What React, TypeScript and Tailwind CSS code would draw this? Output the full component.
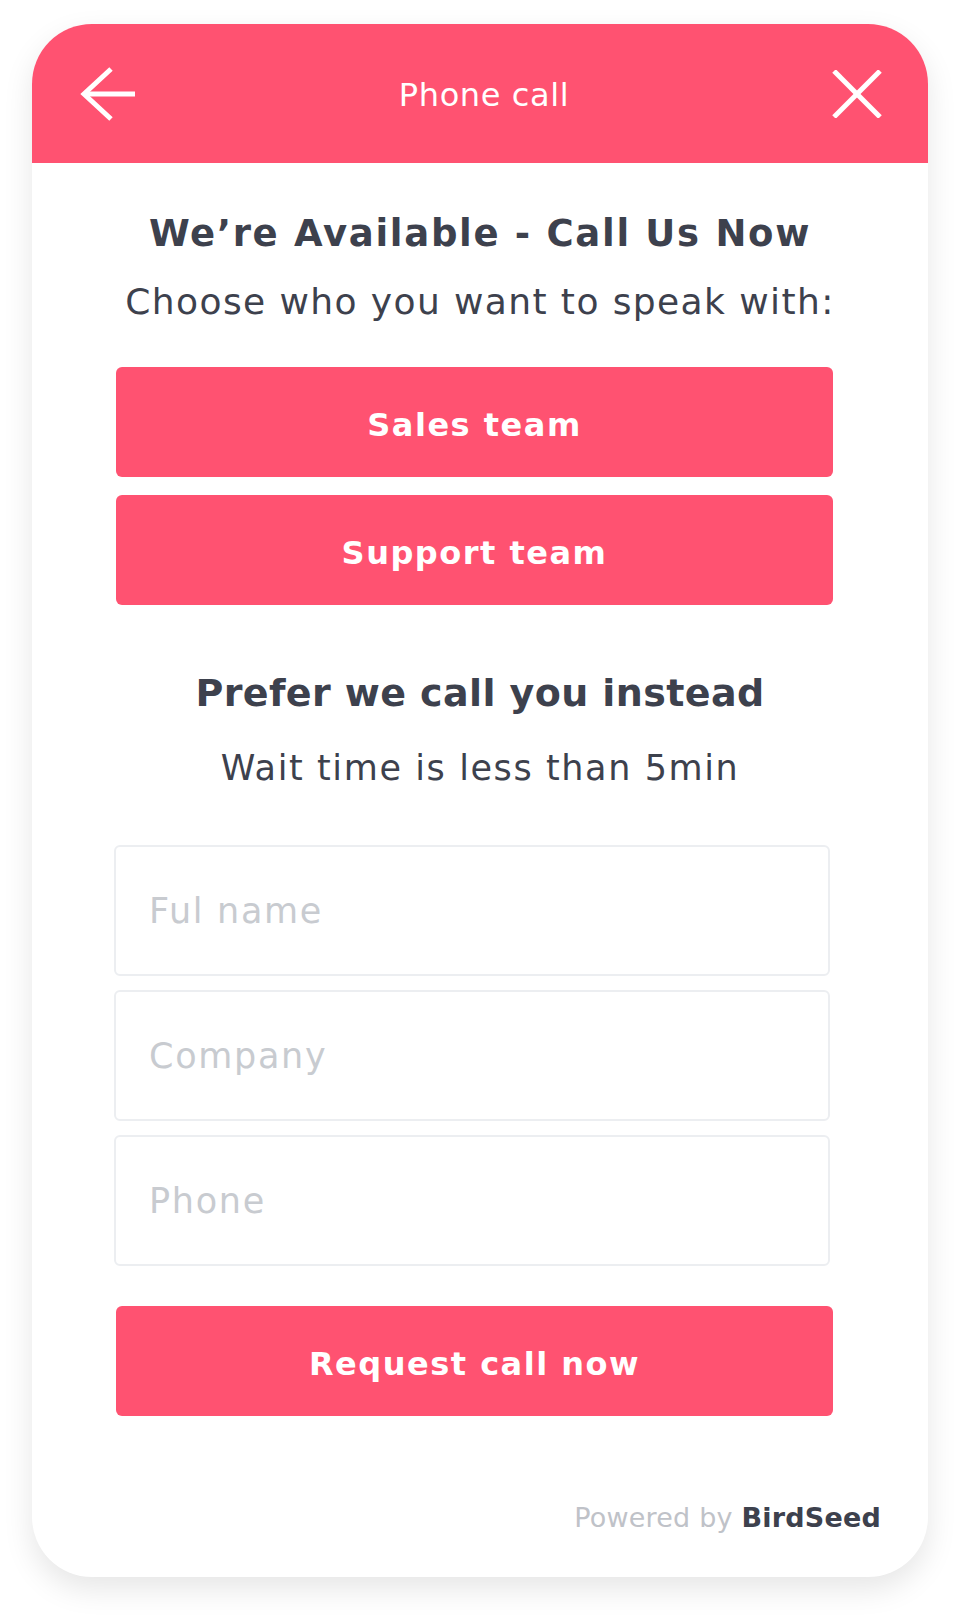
const font = { fontFamily: '"DejaVu Sans", "Open Sans", sans-serif' };

function BackArrow() {
  return (
    <svg width="56" height="54" viewBox="0 0 56 54" fill="none" stroke="white" strokeWidth="5">
      <path d="M55 27H4" />
      <path d="M31 2L4 27L31 52" />
    </svg>
  );
}

function CloseIcon() {
  return (
    <svg width="50" height="48" viewBox="0 0 50 48" fill="none" stroke="white" strokeWidth="5">
      <path d="M2 1L48 47" />
      <path d="M48 1L2 47" />
    </svg>
  );
}

function PinkButton({ label }: { label: string }) {
  return (
    <button
      type="button"
      className="ml-[84px] flex h-[110px] w-[717px] items-center justify-center rounded-md bg-[#ff5271] pt-[6px] text-[32px] font-bold tracking-[1.5px] text-white"
    >
      {label}
    </button>
  );
}

function Field({ placeholder }: { placeholder: string }) {
  return (
    <input
      placeholder={placeholder}
      className="ml-[82px] h-[131px] w-[716px] rounded-md border-2 border-[#eceef1] bg-white px-[33px] text-[35px] font-normal tracking-[1.7px] text-[#3d414d] outline-none placeholder:text-[#c8cbd0]"
      style={font}
    />
  );
}

export default function App() {
  return (
    <div className="min-h-[1615px] bg-white pt-6" style={font}>
      <div className="mx-8 overflow-hidden rounded-[60px] bg-white shadow-[0_12px_30px_rgba(0,0,0,0.10)]">
        <div className="flex h-[139px] items-center justify-between bg-[#ff5271] pr-[46px] pl-[48px]">
          <BackArrow />
          <span className="pt-[2px] text-[32px] font-normal tracking-[0.6px] text-white">Phone call</span>
          <CloseIcon />
        </div>

        <div className="flex flex-col pb-[41px]">
          <h1 className="mt-[47px] text-center text-[37px] leading-[48px] font-bold tracking-[1.7px] text-[#3d414d]">
            We’re Available - Call Us Now
          </h1>
          <p className="mt-[22px] text-center text-[36px] leading-[44px] font-normal tracking-[1.4px] text-[#3d414d]">
            Choose who you want to speak with:
          </p>

          <div className="mt-[43px] flex flex-col gap-[18px]">
            <PinkButton label="Sales team" />
            <PinkButton label="Support team" />
          </div>

          <h2 className="mt-[64px] text-center text-[38px] leading-[48px] font-bold tracking-[0.4px] text-[#3d414d]">
            Prefer we call you instead
          </h2>
          <p className="mt-[29px] text-center text-[35px] leading-[44px] font-normal tracking-[1.6px] text-[#3d414d]">
            Wait time is less than 5min
          </p>

          <div className="mt-[55px] flex flex-col gap-[14px]">
            <Field placeholder="Ful name" />
            <Field placeholder="Company" />
            <Field placeholder="Phone" />
          </div>

          <div className="mt-[40px]">
            <PinkButton label="Request call now" />
          </div>

          <div className="mt-[84px] flex justify-end pr-[47px] text-[27px] leading-[36px] tracking-[0.2px]">
            <span className="font-normal text-[#bfc2c8]">Powered by&nbsp;</span>
            <span className="font-bold text-[#3d414d]">BirdSeed</span>
          </div>
        </div>
      </div>
    </div>
  );
}
